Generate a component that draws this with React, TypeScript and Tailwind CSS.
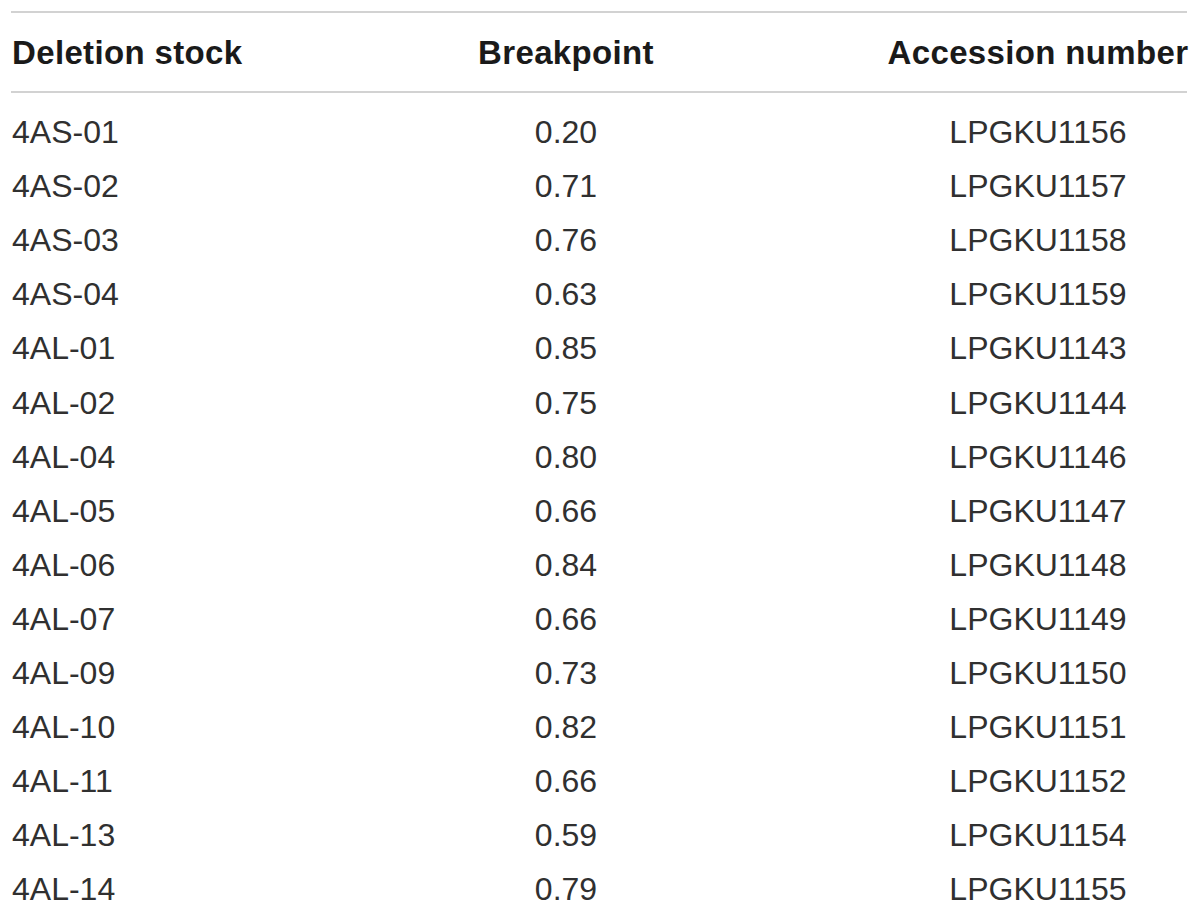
const ROWS: [string, string, string][] = [
  ["4AS-01", "0.20", "LPGKU1156"],
  ["4AS-02", "0.71", "LPGKU1157"],
  ["4AS-03", "0.76", "LPGKU1158"],
  ["4AS-04", "0.63", "LPGKU1159"],
  ["4AL-01", "0.85", "LPGKU1143"],
  ["4AL-02", "0.75", "LPGKU1144"],
  ["4AL-04", "0.80", "LPGKU1146"],
  ["4AL-05", "0.66", "LPGKU1147"],
  ["4AL-06", "0.84", "LPGKU1148"],
  ["4AL-07", "0.66", "LPGKU1149"],
  ["4AL-09", "0.73", "LPGKU1150"],
  ["4AL-10", "0.82", "LPGKU1151"],
  ["4AL-11", "0.66", "LPGKU1152"],
  ["4AL-13", "0.59", "LPGKU1154"],
  ["4AL-14", "0.79", "LPGKU1155"],
];

export default function App() {
  return (
    <div className="min-h-[915px] bg-white pt-[11px] pl-[11px] font-['Liberation_Sans',Arial,sans-serif]">
      <div className="w-[1176px]">
        <div className="grid h-[82px] grid-cols-[232px_646px_298px] items-center whitespace-nowrap border-y-2 border-[#d2d2d2] text-[33px] font-bold leading-none tracking-[0.35px] text-[#1a1a1a]">
          <div className="pl-px">Deletion stock</div>
          <div className="text-center">Breakpoint</div>
          <div className="flex justify-center">Accession number</div>
        </div>
        <div className="pt-[12px]">
          {ROWS.map(([stock, bp, acc]) => (
            <div
              key={stock}
              className="grid h-[54.1px] grid-cols-[232px_646px_298px] items-center whitespace-nowrap text-[32px] leading-none text-[#303030]"
            >
              <div className="pl-px">{stock}</div>
              <div className="text-center">{bp}</div>
              <div className="text-center">{acc}</div>
            </div>
          ))}
        </div>
      </div>
    </div>
  );
}
